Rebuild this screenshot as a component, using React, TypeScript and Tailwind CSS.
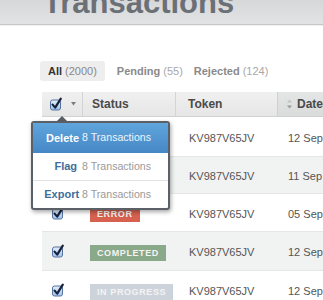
import React from "react";

function Check({ className = "" }: { className?: string }) {
  return (
    <svg width="14" height="14" viewBox="0 0 14 14" className={className}>
      <defs>
        <linearGradient id="cbg" x1="0" y1="0" x2="0" y2="1">
          <stop offset="0" stopColor="#e4effc" />
          <stop offset="1" stopColor="#9ec2ee" />
        </linearGradient>
      </defs>
      <rect x="1.5" y="3" width="10" height="10" rx="2" fill="url(#cbg)" stroke="#56739f" strokeWidth="1" />
      <path d="M3.6 7.6 L6.2 10.6 L11.8 1.6" fill="none" stroke="#17223a" strokeWidth="2.2" strokeLinecap="round" strokeLinejoin="round" />
    </svg>
  );
}

function Badge({ label, color }: { label: string; color: string }) {
  return (
    <span
      className={`inline-block h-[16px] px-[7px] text-[9px] leading-[16px] font-bold tracking-[0.6px] text-[#f4f4f4] ${color}`}
    >
      {label}
    </span>
  );
}

const rows = [
  { status: "COMPLETED", color: "bg-[#8aa88a]", token: "KV987V65JV", date: "12 Sep", alt: false, h: "h-[40px]" },
  { status: "COMPLETED", color: "bg-[#8aa88a]", token: "KV987V65JV", date: "11 Sep", alt: true, h: "h-[37px]" },
  { status: "ERROR", color: "bg-[#d6614f]", token: "KV987V65JV", date: "05 Sep", alt: false, h: "h-[38px]" },
  { status: "COMPLETED", color: "bg-[#8aa88a]", token: "KV987V65JV", date: "12 Sep", alt: true, h: "h-[39px]" },
  { status: "IN PROGRESS", color: "bg-[#ccd3db]", token: "KV987V65JV", date: "12 Sep", alt: false, h: "h-[39px]" },
];

export default function App() {
  return (
    <div className="relative w-[323px] h-[300px] overflow-hidden bg-white font-['Liberation_Sans',Arial,sans-serif]">
      <div className="h-[25px] overflow-hidden bg-gradient-to-b from-[#d6d7d9] to-[#e2e3e4] border-b border-[#c6c7c9]">
        <h1 className="ml-[43px] -mt-[13px] text-[31px] leading-[31px] font-bold text-[#6b7077] whitespace-nowrap">
          Transactions
        </h1>
      </div>
      <div className="h-px bg-[#efefef]" />

      <div className="mt-[35px] ml-[40px] flex items-center text-[11px] h-[20px]">
        <div className="h-[20px] px-[8px] flex items-center rounded-[3px] bg-[#eeeeee]">
          <span className="font-bold text-[#333]">All</span>
          <span className="ml-[3px] text-[#888]">(2000)</span>
        </div>
        <div className="ml-[4px] pl-[8px] pr-[4px] flex items-center">
          <span className="font-bold text-[#8a8a8a]">Pending</span>
          <span className="ml-[3px] text-[#a8a8a8]">(55)</span>
        </div>
        <div className="pl-[7px] flex items-center">
          <span className="font-bold text-[#8a8a8a]">Rejected</span>
          <span className="ml-[3px] text-[#a8a8a8]">(124)</span>
        </div>
      </div>

      <div className="mt-[11px] ml-[42px] w-[340px]">
        <div className="flex h-[25px] bg-gradient-to-b from-[#f0f0f0] to-[#e6e6e6] border-b border-[#d2d2d2] text-[12px] font-bold text-[#4a4a4a]">
          <div className="w-[41px] flex items-center pl-[7px] border-r border-[#d4d4d4]">
            <Check />
            <svg width="5" height="4" viewBox="0 0 5 4" className="ml-[8px]">
              <path d="M0 0 L5 0 L2.5 3.5 Z" fill="#7d7d7d" />
            </svg>
          </div>
          <div className="w-[93px] flex items-center pl-[9px] border-r border-[#d4d4d4]">Status</div>
          <div className="w-[102px] flex items-center pl-[12px] border-r border-[#d0d0d0]">Token</div>
          <div className="flex-1 flex items-center pl-[9px] bg-gradient-to-b from-[#e4e5e5] to-[#dadbdb]">
            <svg width="5" height="10" viewBox="0 0 5 10">
              <path d="M0 3.5 L2.5 0.5 L5 3.5 Z" fill="#c2c2c2" />
              <path d="M0 6.5 L2.5 9.5 L5 6.5 Z" fill="#9a9a9a" />
            </svg>
            <span className="ml-[5px]">Date</span>
          </div>
        </div>

        {rows.map((r, i) => (
          <div
            key={i}
            className={`flex ${r.h} items-center border-b border-[#e6e6e6] text-[11px] text-[#555] ${
              r.alt ? "bg-[#f1f2f2]" : "bg-white"
            }`}
          >
            <div className="w-[41px] pl-[9px] flex items-center">
              <Check />
            </div>
            <div className="w-[93px] pl-[7px] flex items-center pt-[3px]">
              <Badge label={r.status} color={r.color} />
            </div>
            <div className="w-[102px] pl-[13px] pt-[3px]">{r.token}</div>
            <div className="flex-1 pl-[10px] pt-[3px] whitespace-nowrap">{r.date}</div>
          </div>
        ))}
      </div>

      {/* dropdown arrow */}
      <div className="absolute left-[57px] top-[116px] w-0 h-0 border-l-[5px] border-r-[5px] border-b-[5px] border-l-transparent border-r-transparent border-b-[#5b6066]" />
      {/* dropdown */}
      <div className="absolute left-[31px] top-[121px] w-[139px] border-2 border-[#5b6066] rounded-[3px] bg-white overflow-hidden shadow-[1px_2px_4px_rgba(0,0,0,0.35)] text-[11px]">
        <div className="h-[30px] flex items-center justify-end pr-[17px] bg-gradient-to-b from-[#60a5dc] to-[#4687c6] text-white">
          <span className="font-bold">Delete</span>
          <span className="ml-[3px] text-[10.6px] text-[#eef5fc]">8 Transactions</span>
        </div>
        <div className="h-[28px] flex items-center justify-end pr-[17px] border-b border-[#e2e2e2]">
          <span className="font-bold text-[#3f6e9a]">Flag</span>
          <span className="ml-[5px] text-[10.6px] text-[#9a9a9a]">8 Transactions</span>
        </div>
        <div className="h-[27px] flex items-center justify-end pr-[17px]">
          <span className="font-bold text-[#3f6e9a]">Export</span>
          <span className="ml-[3px] text-[10.6px] text-[#9a9a9a]">8 Transactions</span>
        </div>
      </div>
    </div>
  );
}
